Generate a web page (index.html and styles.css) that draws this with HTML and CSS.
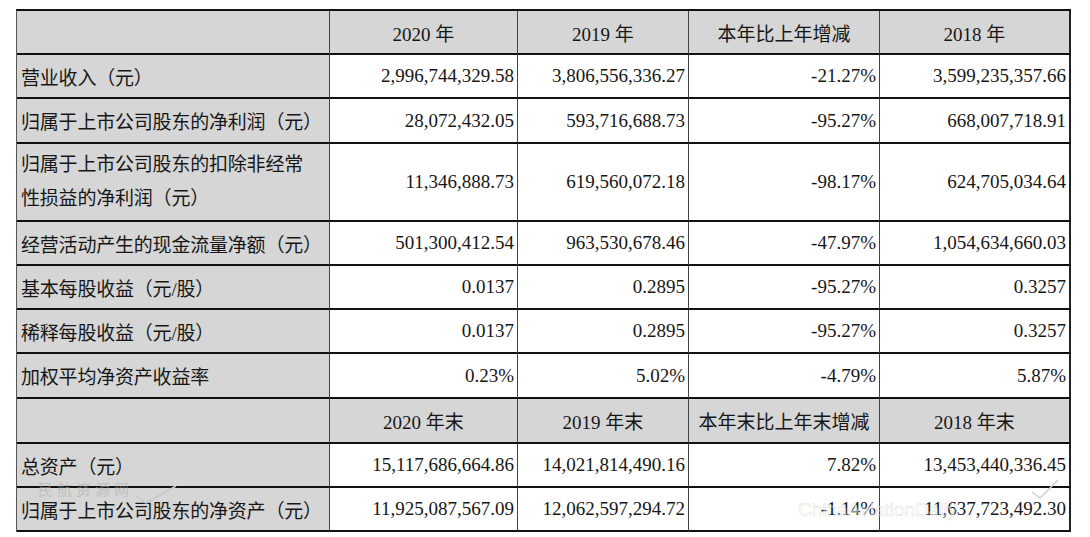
FILE: index.html
```html
<!DOCTYPE html>
<html lang="zh-CN">
<head>
<meta charset="utf-8">
<title>主要会计数据</title>
<link rel="stylesheet" href="styles.css">
</head>
<body>
<div class="page">
  <div class="grid">
    <div class="c lbl hd"></div>
    <div class="c hd ctr">2020 年</div>
    <div class="c hd ctr">2019 年</div>
    <div class="c hd ctr">本年比上年增减</div>
    <div class="c hd ctr">2018 年</div>

    <div class="c lbl">营业收入（元）</div>
    <div class="c num">2,996,744,329.58</div>
    <div class="c num">3,806,556,336.27</div>
    <div class="c num">-21.27%</div>
    <div class="c num">3,599,235,357.66</div>

    <div class="c lbl r45">归属于上市公司股东的净利润（元）</div>
    <div class="c num r45">28,072,432.05</div>
    <div class="c num r45">593,716,688.73</div>
    <div class="c num r45">-95.27%</div>
    <div class="c num r45">668,007,718.91</div>

    <div class="c lbl r78 two">归属于上市公司股东的扣除非经常<br>性损益的净利润（元）</div>
    <div class="c num r78">11,346,888.73</div>
    <div class="c num r78">619,560,072.18</div>
    <div class="c num r78">-98.17%</div>
    <div class="c num r78">624,705,034.64</div>

    <div class="c lbl">经营活动产生的现金流量净额（元）</div>
    <div class="c num">501,300,412.54</div>
    <div class="c num">963,530,678.46</div>
    <div class="c num">-47.97%</div>
    <div class="c num">1,054,634,660.03</div>

    <div class="c lbl">基本每股收益（元/股）</div>
    <div class="c num">0.0137</div>
    <div class="c num">0.2895</div>
    <div class="c num">-95.27%</div>
    <div class="c num">0.3257</div>

    <div class="c lbl">稀释每股收益（元/股）</div>
    <div class="c num">0.0137</div>
    <div class="c num">0.2895</div>
    <div class="c num">-95.27%</div>
    <div class="c num">0.3257</div>

    <div class="c lbl r45">加权平均净资产收益率</div>
    <div class="c num r45">0.23%</div>
    <div class="c num r45">5.02%</div>
    <div class="c num r45">-4.79%</div>
    <div class="c num r45">5.87%</div>

    <div class="c lbl hd r45"></div>
    <div class="c hd ctr r45">2020 年末</div>
    <div class="c hd ctr r45">2019 年末</div>
    <div class="c hd ctr r45">本年末比上年末增减</div>
    <div class="c hd ctr r45">2018 年末</div>

    <div class="c lbl">总资产（元）</div>
    <div class="c num">15,117,686,664.86</div>
    <div class="c num">14,021,814,490.16</div>
    <div class="c num">7.82%</div>
    <div class="c num">13,453,440,336.45</div>

    <div class="c lbl">归属于上市公司股东的净资产（元）</div>
    <div class="c num">11,925,087,567.09</div>
    <div class="c num">12,062,597,294.72</div>
    <div class="c num">-1.14%</div>
    <div class="c num">11,637,723,492.30</div>
  </div>
  <div class="wm wm-cn">民航资源网</div>
  <svg class="wm-swoosh wm-s1" width="44" height="24" viewBox="0 0 44 24"><path d="M2 12 L12 19 L42 2" fill="none" stroke="#c8c8c8" stroke-width="1.5"/></svg>
  <div class="wm wm-en">ChinaAviationDaily</div>
  <svg class="wm-swoosh wm-s2" width="30" height="24" viewBox="0 0 30 24"><path d="M2 14 L10 20 L28 2" fill="none" stroke="#d0d0d0" stroke-width="1.5"/></svg>
</div>
</body>
</html>
```

FILE: styles.css
```css
html, body {
  margin: 0;
  padding: 0;
  background: #ffffff;
}

.page {
  position: relative;
  width: 1090px;
  height: 537px;
  padding: 9px 0 0 16px;
  box-sizing: border-box;
}

.grid {
  display: grid;
  grid-template-columns: 313px 188px 171px 191px 191px;
  border-top: 2px solid #111;
  border-left: 1px solid #555;
  width: max-content;
  font-family: "Liberation Serif", "Noto Sans CJK SC", serif;
  font-size: 19px;
  color: #161616;
}

.c {
  box-sizing: border-box;
  height: 44px;
  border-right: 1px solid #444;
  border-bottom: 2px solid #111;
  display: flex;
  align-items: center;
  white-space: nowrap;
  overflow: visible;
}

.c:nth-child(5n) {
  border-right: 2px solid #222;
}

.r45 { height: 45px; }
.r78 { height: 78px; }

.lbl {
  background: #d6d6d6;
  padding-left: 4px;
  letter-spacing: -0.2px;
}

.hd {
  background: #d6d6d6;
}

.ctr {
  justify-content: center;
}

.num {
  justify-content: flex-end;
  padding-right: 3px;
}

.two {
  white-space: normal;
  line-height: 34px;
}

.wm {
  position: absolute;
  pointer-events: none;
  line-height: 1;
}

.wm-cn {
  left: 38px;
  top: 481px;
  font-family: "Noto Sans CJK SC", sans-serif;
  font-size: 15px;
  letter-spacing: 4px;
  color: rgba(170, 170, 170, 0.55);
}

.wm-en {
  left: 798px;
  top: 500px;
  font-family: "Liberation Sans", sans-serif;
  font-size: 19px;
  color: rgba(255, 255, 255, 0.55);
  -webkit-text-stroke: 0.5px rgba(150, 150, 150, 0.35);
}

.wm-swoosh {
  position: absolute;
}

.wm-s1 { left: 134px; top: 484px; }
.wm-s2 { left: 1030px; top: 478px; }
```
